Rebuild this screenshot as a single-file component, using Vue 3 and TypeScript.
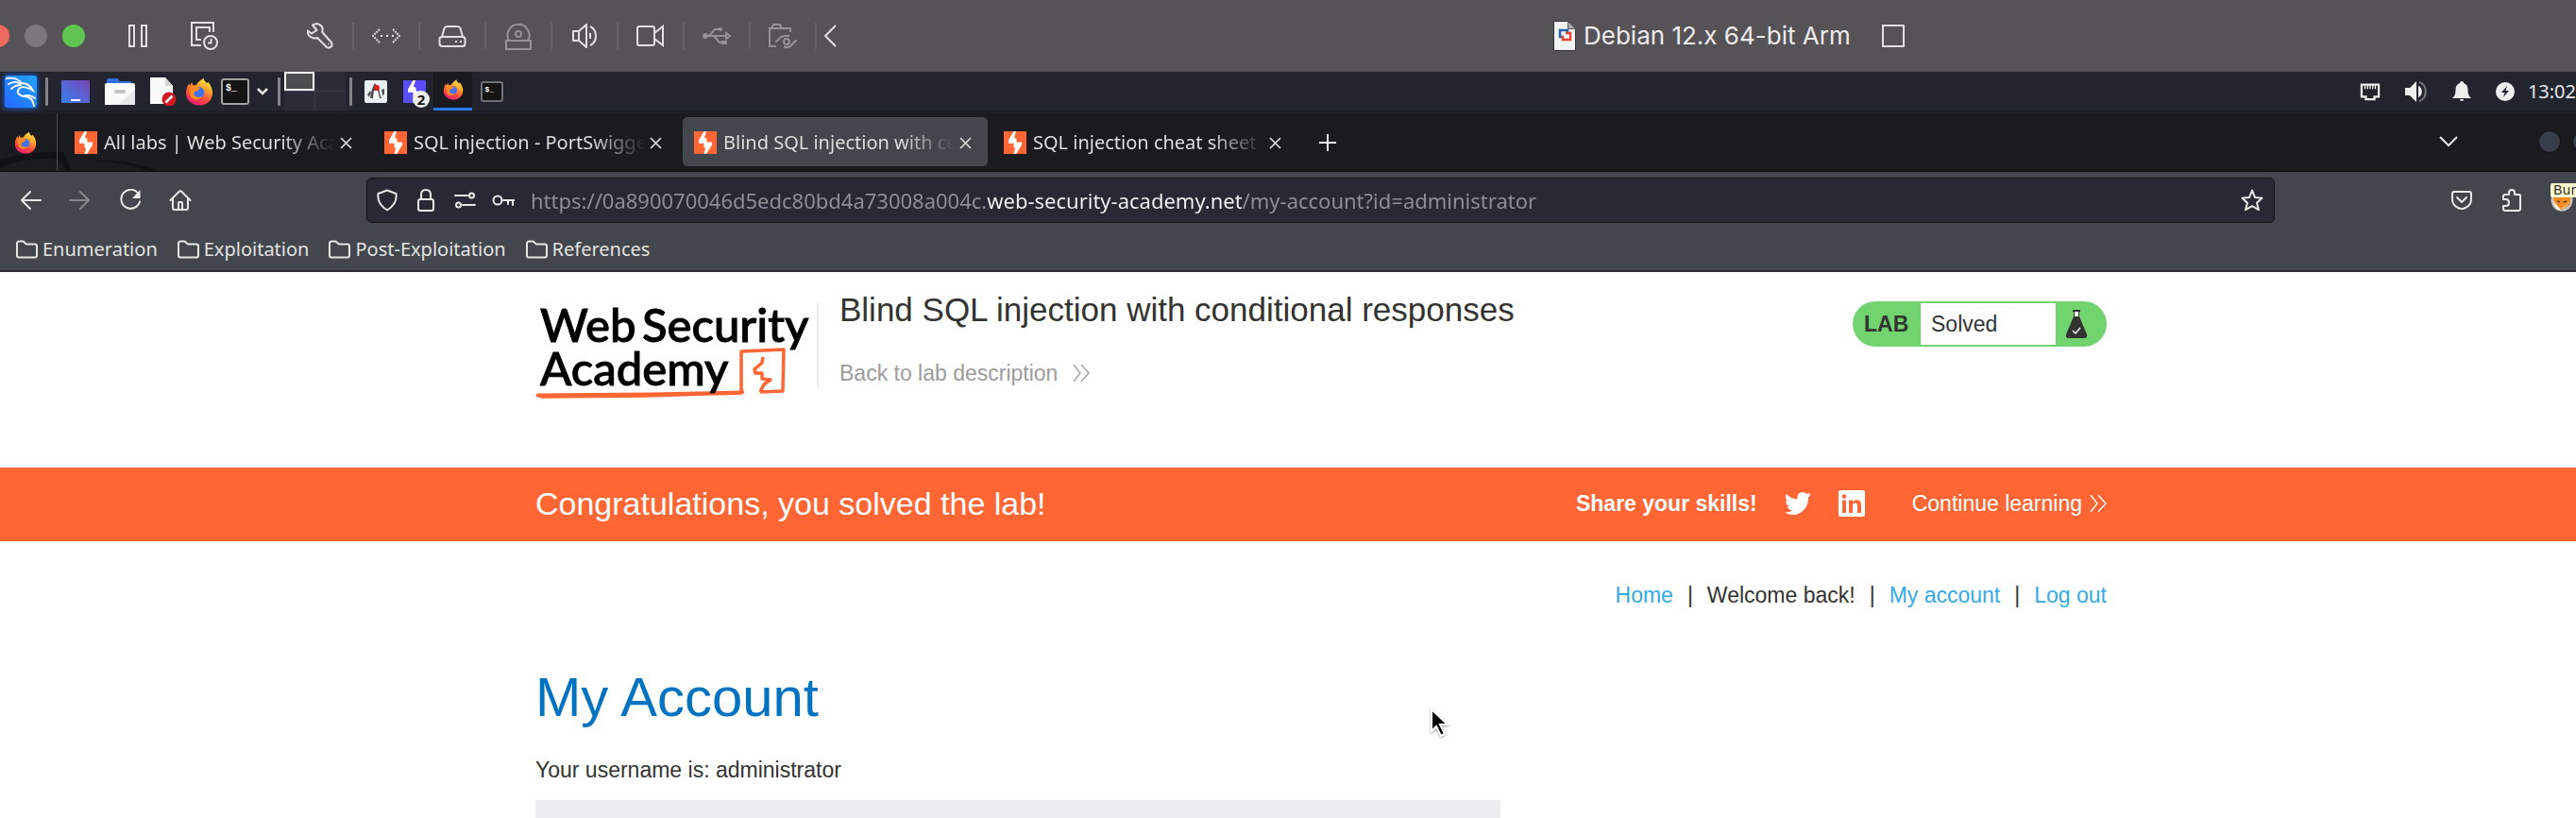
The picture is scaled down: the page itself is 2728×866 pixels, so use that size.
<script setup lang="ts">
import { ref } from 'vue'

interface Tab { title: string; active: boolean }

const tabs = ref<Tab[]>([
  { title: 'All labs | Web Security Academy', active: false },
  { title: 'SQL injection - PortSwigger', active: false },
  { title: 'Blind SQL injection with conditional responses', active: true },
  { title: 'SQL injection cheat sheet | Web', active: false },
])
const bookmarks: string[] = ['Enumeration', 'Exploitation', 'Post-Exploitation', 'References']
const url = ref('https://0a890070046d5edc80bd4a73008a004c.web-security-academy.net/my-account?id=administrator')

function select(i: number) {
  tabs.value.forEach((t, n) => { t.active = n === i })
}
</script>

<template>
  <div class="screen">
    <svg class="defs" width="0" height="0" aria-hidden="true">
      <defs>
        <linearGradient id="ff-body" x1=".8" y1="0" x2=".3" y2="1">
          <stop offset="0" stop-color="#fff04a" /><stop offset=".35" stop-color="#ffa62b" />
          <stop offset=".68" stop-color="#ff4a3d" /><stop offset="1" stop-color="#e21a78" />
        </linearGradient>
        <linearGradient id="desk" x1="0" y1="1" x2="1" y2="0">
          <stop offset="0" stop-color="#3580f0" /><stop offset="1" stop-color="#7b45b5" />
        </linearGradient>
        <linearGradient id="kali" x1="0" y1="1" x2="1" y2="0">
          <stop offset="0" stop-color="#2268ff" /><stop offset="1" stop-color="#22a4ff" />
        </linearGradient>
        <symbol id="firefox" viewBox="0 0 30 30">
          <path fill="url(#ff-body)" d="M19.5.5c.4 3 2.2 4 3.700 5.700l1-1.800c3 3.600 5.300 8 4.800 13C28.300 24.600 22.500 29.500 15 29.500 7 29.500 1 24 1 16.500 1 12.500 2.200 9 4.500 6.200L5 9l2.300-3.700 1.200 3.200 3.500-.5c2-4 5-4.800 7.500-7.500z" />
          <circle cx="14.500" cy="16" r="6" fill="#4072f0" />
          <path fill="#ff8a20" d="M5 10c3-1.800 6-1.500 8 .2l3 1-3 3c-2 .2-3.500 1-3.500 3 0 3.500 5 5 8.500 2.800-1.500 4-9 5-12 .5C4 17 4 13 5 10z" />
        </symbol>
        <symbol id="burp" viewBox="0 0 24 24">
          <path fill="#fff" d="M13 0h-2.500L5 9.500v3.200h5.500v4L12 18.200 10.500 24h2.500L19 14.500v-3h-5.500V8L11 6.500z" />
        </symbol>
        <symbol id="folder" viewBox="0 0 24 24">
          <path fill="none" stroke="#e6e6e4" stroke-width="2" stroke-linejoin="round" d="M2 18.500v-13a2 2 0 0 1 2-2h4.500l3.500 3h9a2 2 0 0 1 2 2v10a2 2 0 0 1-2 2H4a2 2 0 0 1-2-2z" />
        </symbol>
      </defs>
    </svg>

    <header class="vm-bar">
      <div class="lights">
        <button class="light red" aria-label="Close"></button>
        <button class="light grey" aria-label="Minimise"></button>
        <button class="light green" aria-label="Full screen"></button>
      </div>
      <button class="vm-btn" aria-label="Pause">
        <svg width="28" height="28" viewBox="0 0 28 28" class="line"><path d="M5 3h5v22H5zM18 3h5v22h-5z" /></svg>
      </button>
      <button class="vm-btn" aria-label="Snapshots">
        <svg width="30" height="30" viewBox="0 0 30 30" class="line"><path d="M24 11V1H1v24h10M20 11V6H6v13h5" /><circle cx="21" cy="22" r="7" /><path d="M21.500 18v4.500H18" /></svg>
      </button>
      <div class="devices">
        <button class="device" aria-label="Settings">
          <svg width="28" height="28" viewBox="0 0 28 28" class="line"><path stroke-linejoin="round" d="M6 2.500C9 .2 14 1 16 4.500c.9 2 .8 3.500.2 5.500L26 21c1.800 3.500-1.500 7-5 5L11 16c-2 .8-4 .7-6-.3-3-1.500-4.500-4.200-4-7.200l4 3 5.500-3.500z" /><path d="M22.500 22.500h1" /></svg>
        </button>
        <button class="device" aria-label="Network adapter">
          <svg width="32" height="16" viewBox="0 0 32 16" class="line"><path stroke-dasharray="2 1" d="M9 1 2 8l7 7M23 1l7 7-7 7" /><path stroke-dasharray="2 4" d="M10 8h14" /></svg>
        </button>
        <button class="device" aria-label="Hard disk">
          <svg width="30" height="24" viewBox="0 0 30 24" class="line"><path stroke-linejoin="round" d="M4 13 6.500 4Q7.500 2 9.500 2h11q2 0 3 2L26 13M4 13h22q2.500 0 2.500 2.500v4Q28.500 23 26 23H4q-2.500 0-2.500-3.500v-4Q1.500 13 4 13z" /><path d="M18 18h2M23 18h2" /></svg>
        </button>
        <button class="device off" aria-label="CD drive">
          <svg width="30" height="30" viewBox="0 0 30 30" class="line"><path d="M5 20a11.500 11.500 0 1 1 20 0M2 20h26v9H2z" /><circle cx="15" cy="13" r="3" /></svg>
        </button>
        <button class="device" aria-label="Sound">
          <svg width="28" height="28" viewBox="0 0 28 28" class="line"><path stroke-linejoin="round" d="M2 9h6l8-7v24l-8-7H2zM8 9v10M20 4c8 4 8 16 0 20M20 11v6" /></svg>
        </button>
        <button class="device" aria-label="Camera">
          <svg width="30" height="24" viewBox="0 0 30 24" class="line"><path d="M3 2h14q2 0 2 2v16q0 2-2 2H3q-2 0-2-2V4q0-2 2-2zM19 9l9-7v20l-9-7" /></svg>
        </button>
        <button class="device off" aria-label="USB">
          <svg width="30" height="20" viewBox="0 0 30 20" class="line"><path d="M2 10h24M7 10l6-7h5M12 10l6 7h5" /><circle cx="3" cy="10" r="2" /><circle cx="19" cy="3" r="1" /><path d="M21 16h4v2h-4zM25 7l4 3-4 3z" /></svg>
        </button>
        <button class="device off" aria-label="Shared folders">
          <svg width="32" height="26" viewBox="0 0 32 26" class="line"><path d="M9 24H2V5h22v4M4 5l2-4h7l2 4M8 19c4 0 3-6 11-6h4M31 18c-5 0-4 7-11 7h-3" /><circle cx="20" cy="19" r="3" /></svg>
        </button>
      </div>
      <button class="vm-btn less" aria-label="Hide devices">
        <svg width="14" height="26" viewBox="0 0 14 26" class="line"><path d="M13 2 2 13l11 11" /></svg>
      </button>
      <div class="vm-title">
        <svg width="24" height="32" viewBox="0 0 24 32"><path fill="#f4f4f4" stroke="#333" d="M.5.500h15l8 8v23H.5z" /><path fill="#aaa" stroke="#555" d="M15.500.500v8h8z" /><path fill="none" stroke="#2d5da8" stroke-width="2.500" d="M11 17H7v-7h8v3" /><path fill="none" stroke="#e8432c" stroke-width="2.500" d="M13 13h5v7h-8v-4" /></svg>
        <span>Debian 12.x 64-bit Arm</span>
      </div>
      <button class="vm-btn square" aria-label="Single window">
        <svg width="24" height="24" viewBox="0 0 24 24" class="line"><path d="M1 1h22v22H1z" /></svg>
      </button>
    </header>

    <div class="panel">
      <button class="kali" aria-label="Applications">
        <svg width="34" height="34" viewBox="0 0 34 34"><path fill="url(#kali)" d="M0 0h34v34H0z" /><path fill="none" stroke="#fff" stroke-width="1.800" stroke-linecap="round" d="M2 3c7-1 12 0 16 5M4 9c5-3 9-3 13 0M7 14c3-3 6-4 10-4M18 8c4 0 9 2 12 8-5-3-11-6-15-2-3 4 0 7 5 8 6 0 10 3 11 10M20 22c3-2 8-1 12 2" /></svg>
      </button>
      <i class="sep"></i>
      <div class="places">
        <button aria-label="Show desktop"><svg width="30" height="24" viewBox="0 0 30 24"><path fill="url(#desk)" d="M0 0h30v24H0z" /><path fill="#fff" d="M10 20h10v2H10z" /></svg></button>
        <button aria-label="Files"><svg width="32" height="28" viewBox="0 0 32 28"><path fill="#2f6fe0" d="M2 2q0-2 2-2h9l3 3h12v8H2z" /><path fill="#fafafa" d="M0 7q0-2 2-2h28q2 0 2 2v21H0z" /><path fill="#e8e8e8" d="M32 12v16H14z" /><rect x="10" y="12" width="12" height="4" rx="2" fill="#c4c4c4" /></svg></button>
        <button aria-label="Text editor"><svg width="28" height="30" viewBox="0 0 28 30"><path fill="#fafafa" d="M0 0h16l8 9v19H0z" /><path fill="#d8d8d8" d="M16 0v9h8z" /><circle cx="20" cy="23" r="7.500" fill="#d21820" /><path stroke="#fff" stroke-width="2.500" d="m16.500 26.500 7-7" /></svg></button>
      </div>
      <div class="apps">
        <button aria-label="Firefox"><svg width="30" height="30"><use href="#firefox" /></svg></button>
        <button aria-label="Terminal"><span class="term">$_</span></button>
        <button aria-label="More terminals"><svg width="12" height="8" viewBox="0 0 12 8"><path fill="none" stroke="#e8e8e8" stroke-width="2.500" d="m1 1 5 5 5-5" /></svg></button>
      </div>
      <i class="sep"></i>
      <div class="spaces"><button class="on" aria-label="Workspace 1"></button><button aria-label="Workspace 2"></button><button aria-label="Workspace 3"></button><button aria-label="Workspace 4"></button></div>
      <i class="sep"></i>
      <div class="windows">
        <button aria-label="Java"><svg width="24" height="24" viewBox="0 0 24 24"><rect width="24" height="24" rx="2" fill="#e9f0f4" /><path fill="#4c4c52" d="M11 3c3 3 5 7 5 11l2 5H6l1-6c1-4 2-7 4-10z" /><path fill="#fff" d="M10 11h4l2 8H9z" /><path fill="#555" d="m3 15 3-4 1 2-2 5zM18 10l3-1v6l-2 1z" /><circle cx="13" cy="8" r="3" fill="#e02424" /></svg></button>
        <button class="burp-task" aria-label="Burp Suite"><svg width="24" height="24"><use href="#burp" /></svg><b>2</b></button>
        <button class="current" aria-label="Firefox window"><svg width="22" height="22"><use href="#firefox" /></svg></button>
        <button aria-label="Terminal window"><span class="term small">$_</span></button>
      </div>
      <div class="tray">
        <button aria-label="Network"><svg width="22" height="20" viewBox="0 0 24 22"><path fill="none" stroke="#eee" stroke-width="2.500" d="M2 3h20v14h-5v3H7v-3H2z" /><path stroke="#eee" stroke-width="1.500" d="M6 3v5M9 3v5M12 3v5M15 3v5M18 3v5" /></svg></button>
        <button aria-label="Volume"><svg width="24" height="22" viewBox="0 0 24 22"><path fill="#eee" d="M0 7h5l7-7v22l-7-7H0zM14 5c5 1 5 11 0 12z" /><path fill="none" stroke="#777a80" stroke-width="2" d="M15 1c9 2 9 18 0 20" /></svg></button>
        <button aria-label="Notifications"><svg width="20" height="22" viewBox="0 0 20 22"><path fill="#eee" d="M10 0c1.200 0 2 .8 2 2 3 1 4.500 3.500 4.500 7 0 4 .5 6 3.500 9H0c3-3 3.500-5 3.500-9C3.500 5.500 5 3 8 2c0-1.200.8-2 2-2zM8 19h4q0 2-2 2t-2-2z" /></svg></button>
        <button aria-label="Power"><svg width="20" height="20" viewBox="0 0 20 20"><circle cx="10" cy="10" r="10" fill="#eee" /><path fill="#23252e" d="m12 4-6 7h3.500L8 16l6-7h-3.500z" /></svg></button>
        <time>13:02</time>
      </div>
    </div>

    <nav class="tabbar" aria-label="Tabs">
      <svg class="wallpaper" width="180" height="22" viewBox="0 0 180 22" aria-hidden="true"><path fill="#111216" d="M0 10Q35 0 67 2l9 20h-6L62 10Q30 6 0 18zM100 11q38-1 68 11h-10q-26-9-58-11z" /></svg>
      <button class="pinned" aria-label="Firefox View"><svg width="24" height="24"><use href="#firefox" /></svg></button>
      <div v-for="(tab, i) in tabs" :key="tab.title" class="tab" :class="{ active: tab.active }" @click="select(i)">
        <svg class="fav" width="24" height="24"><use href="#burp" /></svg>
        <button class="tab-title">{{ tab.title }}</button>
        <button class="x" aria-label="Close tab"><svg width="13" height="13" viewBox="0 0 13 13"><path stroke="#dcdcda" stroke-width="1.700" d="m1 1 11 11M12 1 1 12" /></svg></button>
      </div>
      <button class="plus" aria-label="New tab"><svg width="18" height="18" viewBox="0 0 18 18"><path stroke="#eee" stroke-width="2" d="M9 0v18M0 9h18" /></svg></button>
      <button class="all-tabs" aria-label="List all tabs"><svg width="20" height="12" viewBox="0 0 20 12"><path fill="none" stroke="#e6e6e4" stroke-width="2" d="m1 1 9 9 9-9" /></svg></button>
      <button class="round" aria-label="Minimise window"></button>
      <button class="round" aria-label="Maximise window"></button>
    </nav>

    <div class="toolbar">
      <div class="nav-row">
        <div class="nav-btns">
          <button aria-label="Back"><svg width="24" height="24" viewBox="0 0 24 24" class="ic"><path d="M23 12H3m9-9-9 9 9 9" /></svg></button>
          <button class="dim" aria-label="Forward"><svg width="24" height="24" viewBox="0 0 24 24" class="ic"><path d="M1 12h20m-9-9 9 9-9 9" /></svg></button>
          <button aria-label="Reload"><svg width="24" height="24" viewBox="0 0 24 24" class="ic"><path d="M20.500 5A10 10 0 1 0 22 13.500" /><path fill="#eee" stroke="none" d="M22.500 1v9H14z" /></svg></button>
          <button aria-label="Home"><svg width="24" height="24" viewBox="0 0 24 24" class="ic"><path d="m1.500 12 9-9q1.500-1.500 3 0l9 9M4 10v10q0 2 2 2h12q2 0 2-2V10M10 22v-7q0-1 1-1h2q1 0 1 1v7" /></svg></button>
        </div>
        <div class="urlbar">
          <button aria-label="Tracking protection"><svg width="24" height="24" viewBox="0 0 24 24" class="ic"><path d="M12 1.500 21.500 5q1.500 11-9.500 17.500Q1 16 2.500 5z" /></svg></button>
          <button aria-label="Connection secure"><svg width="24" height="24" viewBox="0 0 24 24" class="ic"><rect x="4" y="11" width="16" height="12" rx="2" /><path d="M7 11V6q0-5 5-5t5 5v5" /></svg></button>
          <button aria-label="Permissions"><svg width="24" height="24" viewBox="0 0 24 24" class="ic"><path d="M2 7h13M10 17h13" /><circle cx="19.500" cy="7" r="2.500" /><circle cx="5.500" cy="17" r="2.500" /></svg></button>
          <button aria-label="Saved login"><svg width="24" height="24" viewBox="0 0 24 24" class="ic"><circle cx="6" cy="12" r="4.500" /><path d="M10.500 12H24M17 12v4M22 12v5" /></svg></button>
          <input v-model="url" type="text" aria-label="Address" spellcheck="false" />
          <button aria-label="Bookmark this page"><svg width="24" height="24" viewBox="0 0 24 24" class="ic"><path d="M12 1.500 15 9l7.500.700-5.500 5 2 7.500-7-4-7 4 2-7.500-5.500-5L9 9z" /></svg></button>
        </div>
        <div class="extensions">
          <button aria-label="Save to Pocket"><svg width="24" height="24" viewBox="0 0 24 24" class="ic"><path d="M4 3h16q2 0 2 2v6q0 6-6 9-4 2-8 0-6-3-6-9V5q0-2 2-2z" /><path d="m7 9 5 5 5-5" /></svg></button>
          <button aria-label="Extensions"><svg width="24" height="24" viewBox="0 0 24 24" class="ic"><path d="M3 11V8q0-2 2-2h4V4q0-3 3-3t3 3v2h5q1 0 1 2v13q0 2-2 2H5q-2 0-2-2v-3h3q3 0 3-3.500T6 11z" /></svg></button>
          <button class="foxy" aria-label="FoxyProxy"><svg width="24" height="24" viewBox="0 0 24 24"><circle cx="12" cy="12" r="11.500" fill="#c9c2ba" /><path fill="#f58a1c" d="M2 6 12 9l10-3-2 11-8 5-7-5z" /><path fill="#fff" d="m3 13 6 7 2 3-5-2zM21 13l-7 6-2 3z" /><path stroke="#444" stroke-width="1.500" d="m7 13 3 1M17 13l-3 1" /></svg><span>Burp</span></button>
        </div>
      </div>
      <div class="bookmarks">
        <a v-for="b in bookmarks" :key="b" href="#"><svg width="24" height="24"><use href="#folder" /></svg>{{ b }}</a>
      </div>
    </div>

    <main class="page">
      <section class="lab-head wrap">
        <a class="logo" href="#" aria-label="Web Security Academy">
          <svg width="292" height="116" viewBox="0 0 292 116">
            <g class="word"><text x="5" y="54">Web</text><text x="113" y="54">Security</text></g>
            <g fill="none" stroke="#ff6633" stroke-linejoin="round">
              <path stroke-width="3" d="m1 110 5 2M2 110l120-1 99-2" />
              <path stroke-width="3.500" d="m6 112 110-1 102-3v-44l45-2-1 44-24 1" />
              <path stroke-width="3.500" d="m241 70-1 6-8 7 1 4h7v6l9 1-7 5-4 8" />
            </g>
            <g class="word"><text x="5" y="100">Academy</text></g>
          </svg>
        </a>
        <div class="lab-title">
          <h2>Blind SQL injection with conditional responses</h2>
          <a href="#">Back to lab description<svg width="18" height="18" viewBox="0 0 18 18"><path fill="none" stroke="currentColor" stroke-width="1.300" d="m1 0 7 9-7 9M9 0l8 9-8 9" /></svg></a>
        </div>
        <div class="badge">
          <strong>LAB</strong><span>Solved</span>
          <svg width="24" height="30" viewBox="0 0 24 30"><path fill="#fff" d="M10 2h4v6h-4z" /><path fill="#333332" d="M8 0h8v2H8zM9 1h1v7H9zM14 1h1v7h-1zM9 7h6l8 19q1 4-3 4H4q-4 0-3-4z" /><path fill="none" stroke="#fff" stroke-width="1.300" d="m8 22 3 3 5-6" /></svg>
        </div>
      </section>

      <section class="banner wrap">
        <h4>Congratulations, you solved the lab!</h4>
        <div class="share">
          <strong>Share your skills!</strong>
          <a href="#" aria-label="Twitter"><svg width="28" height="26" viewBox="0 0 28 26"><path fill="#fff" d="M28 3q-1 2-3 3.500C25.500 17 18 25 9 25q-5 0-9-2.500 5 .3 8-2.300-4-.2-5-4h2.500Q1 15 1 10.200l2.500.8Q-.5 7.500 1.700 2.800 6.500 8.300 13.500 8.600 12.800 1 19 1q2.500 0 4 2l3.700-1.500Q26 3.500 24.700 4.500z" /></svg></a>
          <a href="#" aria-label="LinkedIn"><svg width="28" height="28" viewBox="0 0 28 28"><rect width="28" height="28" rx="2" fill="#fff" /><path fill="#ff6633" d="M4 10.500h4V24H4zM11 10.500h4v2q1.500-2.300 4.500-2.300Q24 10.200 24 16v8h-4v-7.500q0-3-2.300-3-2.700 0-2.700 3V24h-4z" /><circle cx="6" cy="6.500" r="2.300" fill="#ff6633" /></svg></a>
          <a class="more" href="#">Continue learning<svg width="18" height="18" viewBox="0 0 18 18"><path fill="none" stroke="currentColor" stroke-width="1.300" d="m1 0 7 9-7 9M9 0l8 9-8 9" /></svg></a>
        </div>
      </section>

      <section class="account wrap">
        <nav class="links">
          <a href="#">Home</a><span>|</span><span>Welcome back!</span><span>|</span><a href="#">My account</a><span>|</span><a href="#">Log out</a>
        </nav>
        <h1>My Account</h1>
        <p>Your username is: administrator</p>
        <div class="form-panel"></div>
      </section>
    </main>

    <svg class="cursor" width="22" height="34" viewBox="0 0 22 34" aria-hidden="true"><path fill="#000" stroke="#fff" stroke-width="2" d="M2 2v23l5-5 5 10 4-2-5-10h8z" /></svg>
  </div>
</template>

<style>
html, body { margin: 0; background: #fff; }
</style>

<style scoped>
.screen { position: relative; height: 100vh; overflow: hidden; display: flex; flex-direction: column; background: #fff; font-family: "Noto Sans", sans-serif; }
.screen * { box-sizing: border-box; }
.defs { position: absolute; }
svg { display: block; flex: none; }
button { padding: 0; border: 0; background: none; color: inherit; font: inherit; display: flex; align-items: center; justify-content: center; flex: none; }
a { text-decoration: none; }

.vm-bar { flex: none; height: 76px; display: flex; align-items: center; background: #565356; color: #ececec; }
.line { fill: none; stroke: #e2dfe2; stroke-width: 2; }
.lights { display: flex; gap: 16px; margin-left: -14px; }
.light { width: 24px; height: 24px; border-radius: 50%; }
.red { background: #ee6a5f; }
.grey { background: #7a787b; }
.green { background: #61c554; }
.vm-btn { margin-left: 42px; }
.devices { display: flex; margin-left: 73px; }
.device { width: 70px; height: 28px; border-right: 2px solid #656366; }
.device.off .line { stroke: #959296; }
.vm-btn.less { margin-left: 7px; }
.vm-title { display: flex; align-items: center; gap: 8px; margin-left: 759px; font: 400 26px/32px Inter, sans-serif; }
.vm-btn.square { margin-left: 33px; }

.panel { flex: none; height: 44px; display: flex; align-items: center; background: #23252e; border-bottom: 3px solid #1f2027; }
.kali { width: 44px; height: 41px; }
.kali svg { box-shadow: 0 0 5px 1px #1c5bd0; border-radius: 3px; }
.sep { width: 3px; height: 30px; margin: 0 4px; background: #83848a; border-radius: 1px; flex: none; }
.places { display: flex; align-items: center; gap: 16px; margin-left: 10px; }
.apps { display: flex; align-items: center; gap: 8px; margin: 0 6px 0 9px; }
.term { display: block; width: 30px; height: 28px; border: 2px solid #a2a2a2; border-radius: 3px; background: #141414; color: #fff; font: 700 10px/12px "Liberation Mono", monospace; text-align: left; padding: 3px; }
.term.small { width: 24px; height: 22px; border-color: #6f7072; font-size: 8px; line-height: 8px; }
.spaces { display: grid; grid-template-columns: 32px 32px; grid-template-rows: 20px 20px; gap: 1px; background: #3a3b49; height: 41px; }
.spaces button { background: #2a2c38; }
.spaces button.on { background: #4d4d4f; border: 2px solid #f2f2f2; }
.windows { display: flex; align-items: stretch; height: 41px; }
.windows button { width: 41px; }
.burp-task { position: relative; }
.burp-task svg { background: #5b4dff; }
.burp-task b { position: absolute; right: 4px; bottom: 3px; width: 18px; height: 18px; border-radius: 50%; background: #ededeb; color: #111; font: 700 15px/18px "Noto Sans", sans-serif; text-align: center; }
.windows .current { background: #191a1f; border-bottom: 3px solid #2a7bf6; }
.tray { margin-left: auto; display: flex; align-items: center; gap: 26px; color: #e4e6ea; font-size: 20px; line-height: 28px; }
.tray time { margin-left: -12px; }

.tabbar { flex: none; position: relative; height: 62px; display: flex; align-items: flex-start; padding-top: 4px; background: #1a1b1f; border-bottom: 1px solid #101114; overflow: hidden; color: #dededc; font-size: 20px; }
.wallpaper { position: absolute; left: 0; bottom: 0; }
.pinned { width: 61px; height: 62px; margin-top: -4px; padding-right: 6px; border-right: 1px solid #4a4b50; position: relative; }
.tab { position: relative; width: 323px; height: 52px; margin-left: 5px; padding: 2px 17px 0 12px; display: flex; align-items: center; border-radius: 5px; flex: none; }
.tab:first-of-type { margin-left: 6px; }
.tab.active { background: #44464d; }
.fav { background: #ff6633; }
.tab-title { flex: 1; min-width: 0; margin-left: 7px; justify-content: flex-start; white-space: nowrap; overflow: hidden; line-height: 30px; -webkit-mask-image: linear-gradient(90deg, #000 75%, transparent 98%); mask-image: linear-gradient(90deg, #000 75%, transparent 98%); }
.plus { width: 64px; height: 54px; }
.all-tabs { margin-left: auto; width: 54px; height: 52px; }
.round { width: 24px; height: 24px; margin: 14px -20px 0 0; border-radius: 50%; background: #383d4a; border: 1px solid #0d0e10; }
.all-tabs + .round { margin: 14px 12px 0 68px; }

.toolbar { flex: none; background: #44464d; border-bottom: 2px solid #2b2c31; overflow: hidden; }
.nav-row { height: 60px; display: flex; align-items: center; padding: 0 3px 0 20px; }
.nav-btns, .extensions { display: flex; gap: 29px; flex: none; }
.ic { fill: none; stroke: #e8e8e6; stroke-width: 2; stroke-linejoin: round; stroke-linecap: round; }
.dim { opacity: .4; }
.urlbar { flex: 1; min-width: 0; height: 48px; margin: 0 186px 0 185px; padding: 0 11px 0 9px; display: flex; align-items: center; gap: 17px; background: #282935; border: 1px solid #15161b; border-radius: 5px; }
.urlbar input { flex: 1; min-width: 0; height: 36px; padding: 0; border: 0; outline: 0; font: 400 22px/36px "Noto Sans", sans-serif; color: transparent; background-image: linear-gradient(90deg, #8f9096 483px, #f4f4f4 483px, #f4f4f4 753px, #8f9096 753px); -webkit-background-clip: text; background-clip: text; }
.foxy { position: relative; }
.foxy span { position: absolute; left: 0; top: -6px; padding: 0 3px; background: #fff9cf; border-radius: 2px; color: #333; font: 400 14px/15px "DejaVu Sans", sans-serif; }
.bookmarks { height: 44px; display: flex; align-items: center; gap: 20px; padding-left: 16px; }
.bookmarks a { display: flex; align-items: center; gap: 5px; color: #e2e2e0; font-size: 20px; line-height: 28px; }

.page { flex: 1; min-height: 0; overflow: hidden; color: #333332; font: 400 23px/26px "Liberation Sans", Arial, sans-serif; }
.wrap { padding-left: 567px; padding-right: 497px; }
.lab-head { display: flex; align-items: flex-start; height: 207px; padding-top: 20px; }
.word { fill: #000; stroke: #000; stroke-width: 1; font: 500 49px Lato, sans-serif; }
.logo { margin-right: 6px; }
.lab-title { position: relative; padding-left: 24px; }
.lab-title::before { content: ""; position: absolute; left: 0; top: 12px; height: 90px; border-left: 2px solid #ebebeb; }
.lab-title h2 { margin: 0 0 34px; font-weight: 400; font-size: 35px; line-height: 40px; }
.lab-title a { display: flex; align-items: center; gap: 16px; color: #9c9c9b; }
.badge { margin: 11px 0 0 auto; width: 269px; height: 48px; padding: 2px 20px 2px 12px; display: flex; align-items: center; background: #72d46f; border-radius: 24px; }
.badge strong { width: 60px; }
.badge span { width: 143px; height: 44px; padding-left: 11px; line-height: 44px; background: #fff; margin-right: auto; }
.banner { display: flex; align-items: center; justify-content: space-between; height: 78px; padding-bottom: 2px; background: #ff6633; color: #fff; }
.banner h4 { margin: 0; font-weight: 400; font-size: 34px; line-height: 40px; }
.share { display: flex; align-items: center; gap: 29px; }
.share a { color: #fff; }
.more { display: flex; align-items: center; gap: 8px; margin-left: 21px; }
.links { display: flex; justify-content: flex-end; gap: 15px; padding-top: 44px; }
.links a { color: #33aae6; }
.account h1 { margin: 62px 0 31px; font-weight: 400; font-size: 58px; line-height: 66px; color: #0073c0; }
.account p { margin: 0 0 19px; }
.form-panel { width: 1022px; max-width: 100%; height: 60px; background: #ebeff2; }

.cursor { position: absolute; left: 1514px; top: 749px; filter: drop-shadow(0 1px 1px rgba(0, 0, 0, .4)); }
</style>
